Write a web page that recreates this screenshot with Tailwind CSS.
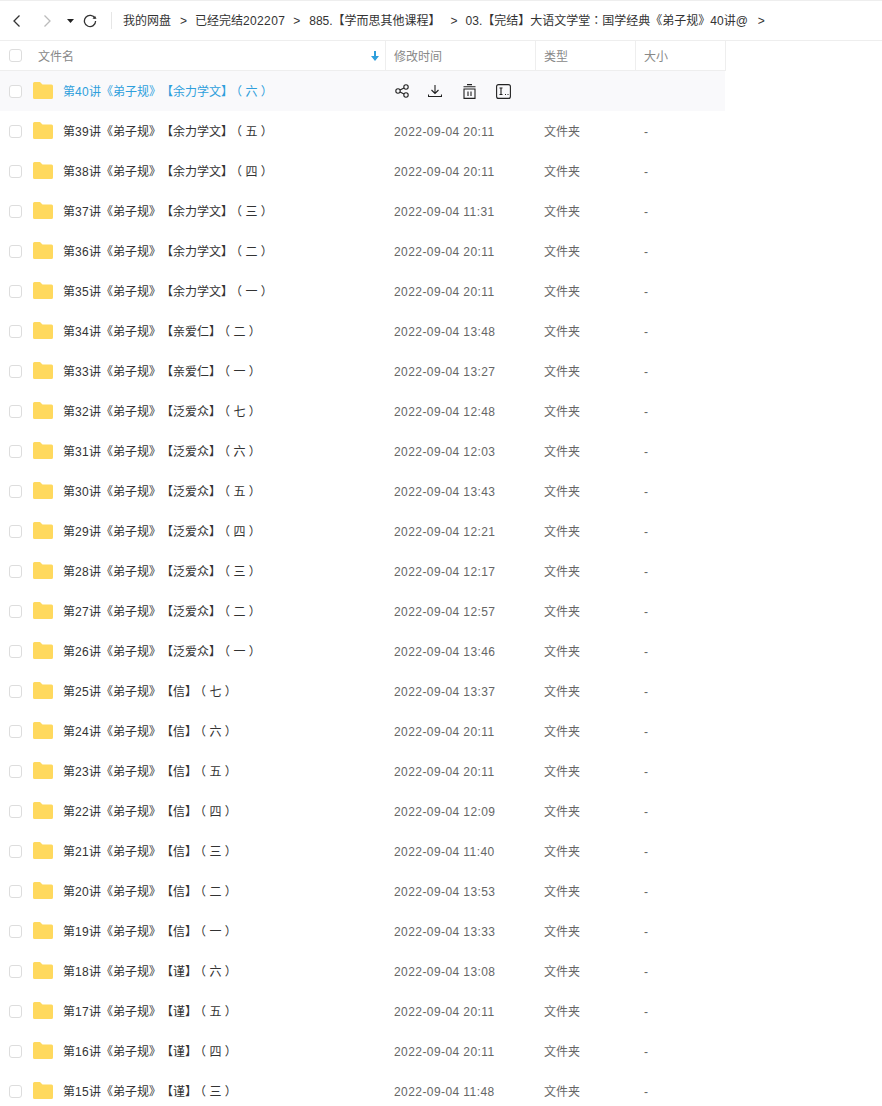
<!DOCTYPE html>
<html lang="zh-CN">
  <head>
    <meta charset="UTF-8" />
    <title>我的网盘</title>
    <script src="https://cdn.jsdelivr.net/npm/@tailwindcss/browser@4"></script>
  </head>
  <body class="bg-white overflow-hidden font-['Liberation_Sans','Noto_Sans_CJK_SC',sans-serif] text-xs text-[#333] [text-spacing-trim:space-all]">
    <div class="h-[41px] border-t border-[#eee] border-b flex items-center">
      <svg class="ml-[11px] w-3 h-4" viewBox="0 0 12 16" fill="none" stroke="#333" stroke-width="1.300"><path d="M8.500 2.500 3 8l5.500 5.500" /></svg>
      <svg class="ml-[18px] w-3 h-4" viewBox="0 0 12 16" fill="none" stroke="#bbb" stroke-width="1.300"><path d="M3.500 2.500 9 8l-5.500 5.500" /></svg>
      <svg class="ml-[14px] w-[7px] h-1" viewBox="0 0 7 4" fill="#222"><path d="M0 0h7L3.500 4z" /></svg>
      <svg class="ml-[9px] w-[14px] h-[14px]" viewBox="0 0 14 14" fill="none" stroke="#333" stroke-width="1.300"><path d="M12 4.500A5.600 5.600 0 1 0 12.600 7" /><path d="M9.500 4.800h4l-1.500-3z" fill="#333" stroke="none" /></svg>
      <span class="ml-[14px] w-px h-[17px] bg-[#e6e6e6]"></span>
      <div class="ml-[11px] flex items-center whitespace-nowrap">
        <span>我的网盘</span>
        <span class="ml-[9px]">&gt;</span>
        <span class="ml-[8px]">已经完结<span class="tracking-[0.35px]">202207</span></span>
        <span class="ml-[8px]">&gt;</span>
        <span class="ml-[9px]">885.【学而思其他课程】</span>
        <span class="ml-[10px]">&gt;</span>
        <span class="ml-[8px]">03.【完结】大语文学堂<span lang="zh-TW" class="font-['Noto_Sans_CJK_TC',sans-serif]">：</span>国学经典《弟子规》40讲@</span>
        <span class="ml-[10px]">&gt;</span>
      </div>
    </div>

    <div class="w-[726px] h-[30px] border-b border-[#eee] flex items-center text-[#888]">
      <div class="w-[386px] h-full border-r border-[#eee] flex items-center">
        <span class="ml-[9px] w-[13px] h-[13px] rounded-[3px] border border-[#ddd]"></span>
        <span class="ml-[16px] pt-0.5">文件名</span>
        <svg class="ml-auto mr-[6px] w-2 h-[10px]" viewBox="0 0 8 10" fill="#2f9fdc"><path d="M3 0h2v5h3L4 10 0 5h3z" /></svg>
      </div>
      <div class="w-[150px] h-full border-r border-[#eee] flex items-center pl-2 pt-0.5">修改时间</div>
      <div class="w-[100px] h-full border-r border-[#eee] flex items-center pl-2 pt-0.5">类型</div>
      <div class="w-[90px] h-full border-r border-[#eee] flex items-center pl-2 pt-0.5">大小</div>
    </div>

    <div id="rows" class="w-[725px]">
      <div class="h-10 bg-[#f9f9fb] flex items-center">
        <div class="w-[386px] flex items-center">
          <span class="ml-[9px] w-[13px] h-[13px] rounded-[3px] border border-[#ddd] bg-white"></span>
          <svg class="ml-[11px] mb-0.5 w-5 h-[17px]" viewBox="0 0 20 17"><path d="M1.500 0h5.500l2.500 2.500h9a1.500 1.500 0 0 1 1.500 1.500v11.500a1.500 1.500 0 0 1-1.500 1.500h-17a1.500 1.500 0 0 1-1.500-1.500v-14a1.500 1.500 0 0 1 1.500-1.500z" fill="#ffd95e" /></svg>
          <span class="ml-[10px] pt-0.5 text-[#2f9fdc] whitespace-nowrap">第<span class="tracking-[0.35px]">40</span>讲《弟子规》【余力学文】<span class="-ml-[3px]">（ 六 ）</span></span>
        </div>
        <div class="flex items-center pl-[9px] text-[#222]">
          <svg class="w-[14px] h-[14px]" viewBox="0 0 14 14" fill="none" stroke="currentColor" stroke-width="1.100"><circle cx="3" cy="7" r="2.200" /><circle cx="11" cy="3" r="2.200" /><circle cx="11" cy="11" r="2.200" /><path d="M5 6l4-2M5 8l4 2" /></svg>
          <svg class="ml-[19px] w-[14px] h-[14px]" viewBox="0 0 14 14" fill="none" stroke="currentColor" stroke-width="1.100"><path d="M7 1v8M3.500 6 7 9.500 10.500 6M.500 10.500v2h13v-2" /></svg>
          <svg class="ml-[21px] w-[13px] h-[15px]" viewBox="0 0 13 15" fill="none" stroke="currentColor" stroke-width="1.100"><path d="M4 .600h5M.500 2.800h12M1 5h11v9.400H1zM5 7.500v4.500M8 7.500v4.500" /></svg>
          <svg class="ml-[20px] w-[15px] h-[15px]" viewBox="0 0 15 15" fill="none" stroke="currentColor" stroke-width="1.100"><rect x=".600" y=".600" width="13.800" height="13.800" rx="2" /><path d="M3.500 4h3M5 4v6.500M3.500 10.500h3M9 10.500h1M11.500 10.500h1" /></svg>
        </div>
      </div>
    </div>

    <script>
      // number, section, part, modified time
      let data = [
        ["39", "余力学文", "五", "20:11"],
        ["38", "余力学文", "四", "20:11"],
        ["37", "余力学文", "三", "11:31"],
        ["36", "余力学文", "二", "20:11"],
        ["35", "余力学文", "一", "20:11"],
        ["34", "亲爱仁", "二", "13:48"],
        ["33", "亲爱仁", "一", "13:27"],
        ["32", "泛爱众", "七", "12:48"],
        ["31", "泛爱众", "六", "12:03"],
        ["30", "泛爱众", "五", "13:43"],
        ["29", "泛爱众", "四", "12:21"],
        ["28", "泛爱众", "三", "12:17"],
        ["27", "泛爱众", "二", "12:57"],
        ["26", "泛爱众", "一", "13:46"],
        ["25", "信", "七", "13:37"],
        ["24", "信", "六", "20:11"],
        ["23", "信", "五", "20:11"],
        ["22", "信", "四", "12:09"],
        ["21", "信", "三", "11:40"],
        ["20", "信", "二", "13:53"],
        ["19", "信", "一", "13:33"],
        ["18", "谨", "六", "13:08"],
        ["17", "谨", "五", "20:11"],
        ["16", "谨", "四", "20:11"],
        ["15", "谨", "三", "11:48"],
      ];
      let rows = document.getElementById("rows");
      for (let i = 0; i < data.length; i++) {
        let d = data[i];
        let row = document.createElement("div");
        row.className = "h-10 flex items-center";
        row.innerHTML = `
          <div class="w-[386px] flex items-center">
            <span class="ml-[9px] w-[13px] h-[13px] rounded-[3px] border border-[#ddd]"></span>
            <svg class="ml-[11px] mb-0.5 w-5 h-[17px]" viewBox="0 0 20 17"><path d="M1.500 0h5.500l2.500 2.500h9a1.500 1.500 0 0 1 1.500 1.500v11.500a1.500 1.500 0 0 1-1.500 1.500h-17a1.500 1.500 0 0 1-1.500-1.500v-14a1.500 1.500 0 0 1 1.500-1.500z" fill="#ffd95e" /></svg>
            <span class="ml-[10px] pt-0.5 whitespace-nowrap">第<span class="tracking-[0.35px]">${d[0]}</span>讲《弟子规》【${d[1]}】<span class="-ml-[3px]">（ ${d[2]} ）</span></span>
          </div>
          <div class="w-[150px] pl-2 pt-0.5 text-[#666] tracking-[0.42px]">2022-09-04 ${d[3]}</div>
          <div class="w-[100px] pl-2 pt-0.5 text-[#666]">文件夹</div>
          <div class="w-[89px] pl-2 pt-0.5 text-[#666]">-</div>`;
        rows.appendChild(row);
      }
    </script>
  </body>
</html>
